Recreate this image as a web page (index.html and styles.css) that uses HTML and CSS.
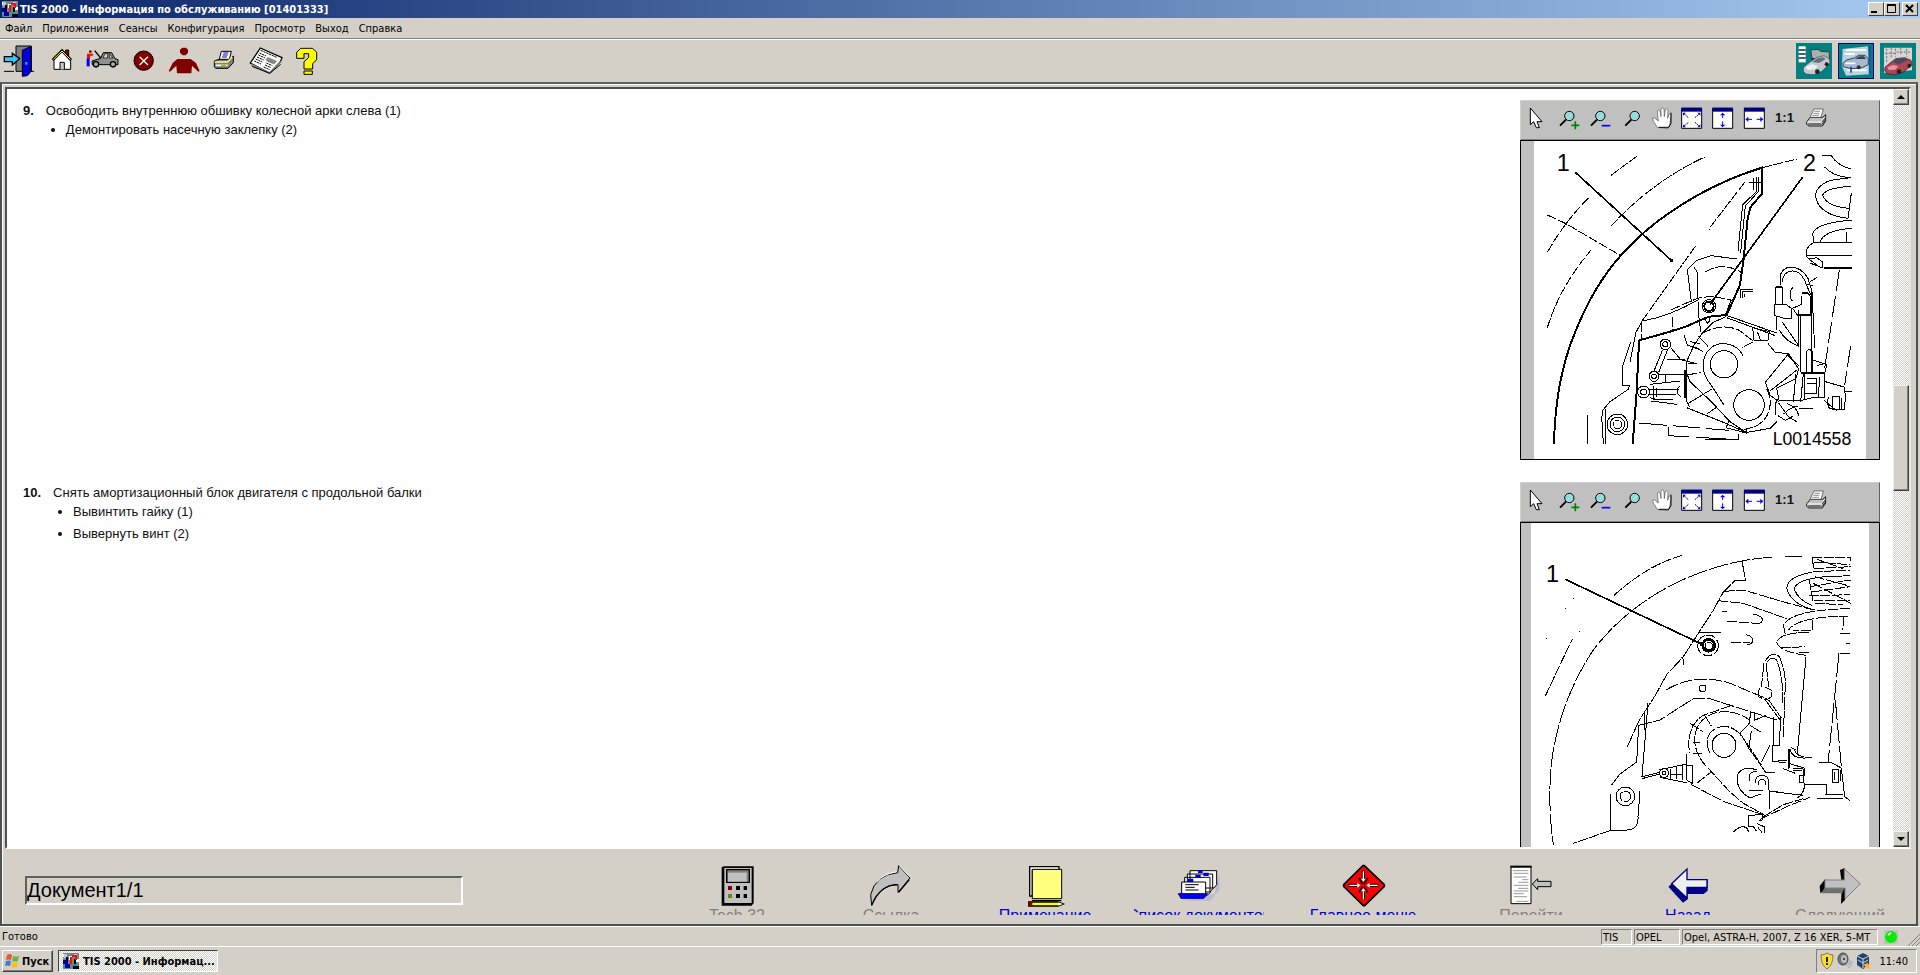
FILE: index.html
```html
<!DOCTYPE html>
<html lang="ru">
<head>
    <meta charset="UTF-8">
    <meta name="viewport" content="width=device-width, initial-scale=1.0">
    <title>TIS 2000 - Информация по обслуживанию</title>
    <link rel="stylesheet" href="styles.css">
</head>
<body>
    <!-- shared icons -->
    <svg class="sprite" aria-hidden="true">
        <symbol id="app" viewBox="0 0 16 16">
            <path fill="#808080" d="M0 0h16v16H0z"/>
            <path fill="#fff" d="M0 1h4v3H0zM6 3h3v4H6zM13 6h3v3h-3z"/>
            <path fill="#9cf" d="M1 1h3v4H1zM11 1h3v2h-3z"/>
            <path fill="#00a" d="M0 7h5v4H0zM2 11h5v4H2z"/>
            <path fill="#000" d="M3 4h2v5H3zM11 6h2v5h-2zM10 13h6v3h-6z"/>
            <path fill="#e11" d="M7 4h2v7H7zM9 2h5v2H9zM12 3h2v4h-2z"/>
            <path fill="#0aa" d="M9 11h5v2H9zM0 13h2v3H0z"/>
        </symbol>
        <symbol id="cursor" viewBox="39 310 84 84">
            <path d="M61 322v50l10-9 8 18h9l-7-18h15z" fill="#fff" stroke="#000" stroke-width="3"/>
        </symbol>
        <symbol id="lens" viewBox="318 310 84 84">
            <path d="M346 375l18-18" stroke="#000" stroke-width="6" fill="none"/>
            <circle cx="374" cy="346" r="14" fill="#b8d8d8" stroke="#000" stroke-width="3"/>
            <path d="M366 344l6-8h6l-12 18zM371 354l14-14v6l-8 9z" fill="#5fe8e8"/>
        </symbol>
        <symbol id="zoom-in" viewBox="0 0 84 84">
            <use href="#lens" x="-10" y="0" width="84" height="84"/>
            <path d="M64 52v24M52 64h24" stroke="#008000" stroke-width="5"/>
        </symbol>
        <symbol id="zoom-out" viewBox="0 0 84 84">
            <use href="#lens" x="-10" y="0" width="84" height="84"/>
            <path d="M50 65h26" stroke="#00f" stroke-width="5"/>
        </symbol>
        <symbol id="hand" viewBox="411 310 84 84">
            <path d="M442 380l-12-19-2-9h6l11 9-3-30 4-3 4 3 3 17v-23l4-4 5 4 1 23 3-22 4-2 4 4-1 25 4-13h4l2 4-4 30-5 7v3z" fill="#fff" stroke="#555" stroke-width="2"/>
            <path d="M483 336v32l-7 12h-30" fill="none" stroke="#000" stroke-width="3"/>
        </symbol>
        <symbol id="fit" viewBox="504 310 84 84">
            <path d="M515 323h60v60h-60z" fill="#fff" stroke="#000" stroke-width="3"/>
            <path d="M514 321h62v12h-62z" fill="#000080"/>
            <path d="M521 338l14 13m20 14l14 13M569 338l-14 13m-20 14l-14 13" stroke="#000" stroke-width="3" stroke-dasharray="5 2"/>
            <path d="M519 336h9l-9 9zM571 336h-9l9 9zM519 380h9l-9-9zM571 380h-9l9-9z" fill="#00f"/>
        </symbol>
        <symbol id="fit-v" viewBox="597 310 84 84">
            <path d="M608 323h60v60h-60z" fill="#fff" stroke="#000" stroke-width="3"/>
            <path d="M607 321h62v12h-62z" fill="#000080"/>
            <path d="M638 342v10m0 10v12" stroke="#00f" stroke-width="3"/>
            <path d="M638 336l8 8h-16zM638 380l8-8h-16z" fill="#00f"/>
        </symbol>
        <symbol id="fit-h" viewBox="690 310 84 84">
            <path d="M703 323h60v60h-60z" fill="#fff" stroke="#000" stroke-width="3"/>
            <path d="M702 321h62v12h-62z" fill="#000080"/>
            <path d="M713 356h13m14 0h14" stroke="#00f" stroke-width="3"/>
            <path d="M706 356l9-8v16zM760 356l-9-8v16z" fill="#00f"/>
        </symbol>
        <symbol id="print" viewBox="876 310 84 84">
            <path d="M891 362l10-12h37l9-8v19l-10 15h-40l-8-6z" fill="#c0c0c0" stroke="#222" stroke-width="3"/>
            <path d="M900 350l12-25h28l-7 25z" fill="#fff" stroke="#333" stroke-width="2"/>
            <path d="M913 332h17M910 338h18M907 344h20" stroke="#555" stroke-width="2"/>
            <path d="M892 364h42l10-14" fill="none" stroke="#fff" stroke-width="3"/>
            <path d="M895 370h38M936 364l10-12M936 372l10-14" stroke="#222" stroke-width="3"/>
        </symbol>
    </svg>

    <header class="titlebar">
        <svg class="app-icon"><use href="#app"/></svg>
        <h1>TIS 2000 - Информация по обслуживанию [01401333]</h1>
        <div class="window-buttons">
            <button aria-label="Свернуть"><svg viewBox="0 0 13 12"><path d="M2 8h6v2H2z"/></svg></button>
            <button aria-label="Развернуть"><svg viewBox="0 0 13 12"><path d="M2 1h9v9H2zM3 3v6h7V3z" fill-rule="evenodd"/></svg></button>
            <button class="close" aria-label="Закрыть"><svg viewBox="0 0 13 12"><path d="M3 2l7 7M10 2l-7 7" stroke="#000" stroke-width="2"/></svg></button>
        </div>
    </header>

    <nav class="menubar">
        <a href="#">Файл</a>
        <a href="#">Приложения</a>
        <a href="#">Сеансы</a>
        <a href="#">Конфигурация</a>
        <a href="#">Просмотр</a>
        <a href="#">Выход</a>
        <a href="#">Справка</a>
    </nav>

    <div class="toolbar">
        <button class="exit" aria-label="Выход">
            <svg viewBox="6 133 102 102">
                <path d="M12 215h30M88 215h14" stroke="#000" stroke-width="3"/>
                <path d="M48 139h46v76H48z" fill="#808080" stroke="#000" stroke-width="3"/>
                <path d="M67 152l26-12v75l-11 13-15 2z" fill="#0000d8" stroke="#000" stroke-width="3"/>
                <path d="M76 187h6v8h-6z" fill="#0cf"/>
                <path d="M13 171h24v-10l22 16-22 19v-10H13z" fill="#35c8f0" stroke="#000" stroke-width="4"/>
            </svg>
        </button>
        <button aria-label="Домой">
            <svg viewBox="136 133 102 102">
                <path d="M198 151h9v24h-9z" fill="#a00000" stroke="#000" stroke-width="3"/>
                <path d="M163 177l24-23 26 23v32h-50z" fill="#fff" stroke="#000" stroke-width="3"/>
                <path d="M159 181l28-28 27 28" fill="none" stroke="#000" stroke-width="8"/>
                <path d="M161 179l26-25 25 25" fill="none" stroke="#ff0" stroke-width="3"/>
                <path d="M181 209v-21h13v21" fill="#ccc" stroke="#000" stroke-width="3"/>
            </svg>
        </button>
        <button aria-label="Автомобиль">
            <svg viewBox="256 133 102 102">
                <path d="M274 184l26-8 8-17h25l10 18 9 3v15h-77z" fill="#909090" stroke="#000" stroke-width="3"/>
                <path d="M307 175l6-13h8v13zM326 162l11 13h-11z" fill="#d4d0c8" stroke="#000" stroke-width="2"/>
                <path d="M282 153l18 22" stroke="#000" stroke-width="4"/>
                <circle cx="286" cy="194" r="8" fill="#aaa" stroke="#000" stroke-width="4"/>
                <circle cx="337" cy="194" r="8" fill="#aaa" stroke="#000" stroke-width="4"/>
                <circle cx="269" cy="156" r="4" fill="#800000"/>
                <path d="M259 162h18v6h-9v9h-9z" fill="#f00"/>
                <path d="M258 176h9v24h-9z" fill="#00f"/>
            </svg>
        </button>
        <button aria-label="Стоп">
            <svg viewBox="382 133 102 102">
                <circle cx="432" cy="183" r="29" fill="#800000" stroke="#000" stroke-width="3"/>
                <path d="M420 171l25 25M445 171l-25 25" stroke="#fff" stroke-width="4"/>
            </svg>
        </button>
        <button aria-label="Клиент">
            <svg viewBox="502 133 102 102">
                <path d="M545 144h11l6 6v9l-7 8h-9l-8-8v-9zM530 178h40l16 12 11 24-4 2-19-18-2 23h-43l-2-23-19 18-4-2 12-24z" fill="#800000"/>
            </svg>
        </button>
        <button aria-label="Печать">
            <svg viewBox="627 133 102 102">
                <path d="M643 184l14-5h31l12-10v20l-16 17h-37l-4-5z" fill="#808080" stroke="#000" stroke-width="3"/>
                <path d="M658 179l6-24h30l-6 24z" fill="#fff" stroke="#000" stroke-width="3"/>
                <path d="M670 160h15M668 166h15M666 172h15" stroke="#00a" stroke-width="3"/>
                <path d="M644 187h38l15-15" fill="none" stroke="#ffff80" stroke-width="4"/>
                <path d="M647 197h36" stroke="#fff" stroke-width="5"/>
                <path d="M663 197h15" stroke="#aa0" stroke-width="4"/>
            </svg>
        </button>
        <button aria-label="Новости">
            <svg viewBox="750 133 102 102">
                <path d="M751 190l30-45 65 29-5 13-32 33z" fill="#fff" stroke="#000" stroke-width="4"/>
                <path d="M753 194l56 26 33-35" fill="none" stroke="#808080" stroke-width="5"/>
                <path d="M756 200l53 21 33-27" fill="none" stroke="#000" stroke-width="3"/>
                <path d="M782 152l48 21M778 160l20 9M775 166l20 9M771 172l20 9M767 178l20 9M763 184l20 9M803 184l18 8M799 190l18 8M795 196l18 8M791 202l18 8" stroke="#000" stroke-width="3" stroke-dasharray="7 2"/>
                <path d="M803 172l28 12-8 10-27-13z" fill="#888"/>
            </svg>
        </button>
        <button aria-label="Помощь">
            <svg viewBox="873 133 102 102">
                <path d="M890 176v-18l12-12h36l12 12v22l-12 12v16h-26v-22l14-12v-12h-14v14z" fill="#ff0" stroke="#000" stroke-width="3"/>
                <path d="M912 214h25v10h-25z" fill="#ff0" stroke="#000" stroke-width="3"/>
            </svg>
        </button>
        <div class="views">
            <button aria-label="Каталог">
                <svg viewBox="858 129 108 108">
                    <path d="M866 139h21v48h-21z" fill="#fff"/>
                    <path d="M866 150h21M866 162h21M866 174h21" stroke="#033" stroke-width="4"/>
                    <path d="M902 150l22-2 8 6 26 2v26l-50 6z" fill="#a9b0b0" stroke="#244" stroke-width="3"/>
                    <path d="M904 174h16v14h-14z" fill="#222"/>
                    <path d="M880 203l16-14 22-16 24-6 16 10 2 12-24 25-24 10-24-2-8-8z" fill="#c3c9cf" stroke="#445" stroke-width="2"/>
                    <path d="M906 186l16-11 18-3 7 5-20 12z" fill="#63707d"/>
                    <path d="M886 201l20-8 18 5-10 10-20 2z" fill="#eef1f4"/>
                    <circle cx="922" cy="215" r="7" fill="#222"/><circle cx="950" cy="193" r="6" fill="#222"/>
                </svg>
            </button>
            <button class="active" aria-label="Обслуживание">
                <svg viewBox="984 129 108 108">
                    <path d="M998 147l76-8 4 84-70 4-12-28z" fill="#b9d4df"/>
                    <path d="M1008 150h60M1004 162h30M1012 211h58M1002 202h40" stroke="#fff" stroke-width="6"/>
                    <path d="M999 190l10-10 24-6 12-8h20l10 10v18l-22 10-30 2-24-6z" fill="#a7b9cc" stroke="#345" stroke-width="3"/>
                    <path d="M1035 177l12-8h15l6 8z" fill="#345"/>
                    <path d="M1006 190h30" stroke="#fff" stroke-width="5"/>
                    <circle cx="1046" cy="202" r="6" fill="#234"/>
                    <path d="M1079 138v84M1023 200v18" stroke="#1c4c9c" stroke-width="5"/>
                </svg>
            </button>
            <button aria-label="Кузов">
                <svg viewBox="1110 129 108 108">
                    <path d="M1122 143h84v68l-84 8z" fill="#d5d5d8"/>
                    <path d="M1130 146v42M1144 143v30M1156 146v24M1172 143v20M1190 146v24M1125 160h30M1160 156h40" stroke="#777" stroke-width="3" stroke-dasharray="7 4"/>
                    <path d="M1125 202l14-12 18-14 26-3 20 8 3 14-24 20-28 10-22-4-8-8z" fill="#ae4454" stroke="#411" stroke-width="2"/>
                    <path d="M1146 187l15-11 22-2 10 6-26 12z" fill="#444c60"/>
                    <path d="M1132 202l18-7 15 4-9 10-20 1z" fill="#dc98a0"/>
                    <circle cx="1167" cy="215" r="7" fill="#222"/><circle cx="1198" cy="197" r="6" fill="#222"/>
                </svg>
            </button>
        </div>
    </div>

    <main class="workspace">
        <div class="document">
            <div class="steps">
                <section class="step">
                    <b class="number">9.</b>
                    <div class="instructions">
                        <p>Освободить внутреннюю обшивку колесной арки слева (1)</p>
                        <ul>
                            <li>Демонтировать насечную заклепку (2)</li>
                        </ul>
                    </div>
                    <div class="figure">
                        <div class="figure-tools">
                            <button aria-label="Выбор"><svg><use href="#cursor"/></svg></button>
                            <button aria-label="Увеличить"><svg><use href="#zoom-in"/></svg></button>
                            <button aria-label="Уменьшить"><svg><use href="#zoom-out"/></svg></button>
                            <button aria-label="Лупа"><svg><use href="#lens"/></svg></button>
                            <button aria-label="Сдвиг"><svg><use href="#hand"/></svg></button>
                            <button aria-label="Вписать"><svg><use href="#fit"/></svg></button>
                            <button aria-label="По высоте"><svg><use href="#fit-v"/></svg></button>
                            <button aria-label="По ширине"><svg><use href="#fit-h"/></svg></button>
                            <button>1:1</button>
                            <button aria-label="Печать"><svg><use href="#print"/></svg></button>
                        </div>
                        <div class="figure-view">
                            <svg class="drawing wheel-arch" viewBox="72 18 996 954">
                                <!-- wheel arch -->
                                <path class="bold" d="M132 928C134 820 150 700 196 590C236 490 280 420 332 362C400 285 470 235 560 182C625 146 690 118 756 98V176L722 216L713 250L700 380L690 450L650 540L597 545L570 556L530 574L480 590L388 616L386 640L380 770L368 926"/>
                                <path class="dash" d="M756 98L860 72M302 122L380 64M302 274C390 180 480 115 584 66M112 352C150 285 190 235 238 186M112 578C140 490 180 420 244 344M112 240L168 266L332 362"/>
                                <path d="M738 126v45l-40 38l-14 140M744 126v45l-38 42l-14 140M730 130v36M716 142h40"/>
                                <path class="dash" d="M704 142L604 272L596 286M556 334L396 558"/>
                                <path d="M396 558C460 548 520 520 566 494M396 558L378 592L360 680M362 622L336 700V750H358L356 762L300 800L278 826L274 862M276 860L280 926M286 822V926M233 840V926"/>
                                <path class="dash" d="M484 524L562 490L600 484L664 494M488 546V586M395 562V612"/>
                                <!-- cover -->
                                <path d="M544 500L532 404L560 376L604 362M604 362L680 372M552 396L564 416L562 490"/>
                                <path class="dash" d="M584 412C620 388 660 390 696 414"/>
                                <path d="M566 500V540L572 590M664 494L646 540M692 490V462H728M698 488V470H728M704 486V476"/>
                                <path d="M646 540L800 594M650 548L796 602M648 545L610 562L576 596L552 630L530 680V800L538 816"/>
                                <path class="bold" d="M525 706V790"/>
                                <circle cx="597" cy="514" r="20"/>
                                <circle class="bold" cx="597" cy="514" r="14"/>
                                <path d="M587 545v12l6 8 6-8v-12"/>
                                <!-- gearbox -->
                                <circle cx="642" cy="688" r="41"/>
                                <path d="M700 664C680 620 620 612 592 650C572 680 578 720 600 745L642 810"/>
                                <path class="dash" d="M576 596C610 576 650 568 688 586L732 620L696 638M532 684L564 686M554 636L580 650M532 720L574 712"/>
                                <path d="M526 704L540 740L604 800L660 860L708 892M530 808L606 762M592 836L618 818M530 818L640 862L708 892"/>
                                <circle cx="717" cy="810" r="46"/>
                                <path class="dash" d="M770 762C790 800 782 850 740 872L700 886"/>
                                <path d="M708 878v16l-28-8-32-8 10-22M712 892L780 880L800 860"/>
                                <path d="M522 600l10 30 36 14M540 620l30 6M566 604l28 30M728 578l4 38h42l4-26-50-12M742 590l10 26"/>
                                <path d="M774 626L796 652L836 656L866 702L858 730L800 760L806 790L796 806M836 656L766 742L780 780L806 800M862 704L780 768M832 660L868 694"/>
                                <!-- bracket on the left -->
                                <circle cx="466" cy="628" r="16"/><circle cx="466" cy="628" r="8"/>
                                <circle cx="432" cy="724" r="15"/><circle cx="432" cy="724" r="7"/>
                                <circle cx="401" cy="771" r="18"/><circle cx="401" cy="771" r="9"/>
                                <path d="M458 644L432 708M472 646L446 712M484 640L512 674L560 686M470 674h56M448 718h78M420 748L510 738M418 764h90M418 778h80M430 754v40M440 760v26M420 788l20 6h50M510 754l-8 6v16l10 8M424 798L500 808M466 720v20"/>
                                <circle cx="322" cy="868" r="31"/><circle cx="322" cy="868" r="22"/><circle class="dash" cx="322" cy="868" r="13"/>
                                <path d="M386 864L656 886" stroke-dasharray="84 18"/>
                                <path d="M474 876V902L684 914V896M586 912h96" stroke-dasharray="90 20"/>
                                <!-- hose -->
                                <path d="M810 450V430C812 385 870 385 894 430L906 470L914 640M816 440C822 400 864 396 884 436L902 480"/>
                                <path d="M796 456h22v52h-22zM792 508h36l16 12v30h-20l-30-8zM800 546v40M816 560L866 632M808 584C820 610 840 624 866 634V524M872 540V710M904 470V710"/>
                                <path d="M876 474h18l8 12v54h-40l-14-20 26-12v-24"/>
                                <path class="bold" d="M876 474h18M862 540h40M798 456h18"/>
                                <path d="M848 458q-8 6-8 20t8 20M900 440l20-12M890 448l18 4M888 650v60M908 650v62M888 650q10-12 20 0"/>
                                <!-- lower joint -->
                                <path class="bold" d="M872 714h74"/>
                                <path d="M884 716v80M930 726l-6 60M890 730h28v44h-32M892 746h26M850 800L858 716M872 800L880 716M942 716v72h-36l-30 8h-70M946 740L1002 756L1006 780L1004 824M942 796L976 824H1006M1006 770h20"/>
                                <path d="M956 786q-8 16 2 34l24 6M966 784v38h22v-38zM994 788v36M910 676l40 12-4 24M920 692l28-8"/>
                                <path d="M806 804L836 846L860 860M832 806q30 10 34 36M820 838q20-22 44-24M804 842l22 14 22-12M866 820h44M796 800v40"/>
                                <!-- spring and strut -->
                                <path d="M936 62L964 62Q980 90 1022 102M944 96Q970 126 1022 128L960 136Q910 158 918 190Q930 240 1014 250M1024 154Q950 158 938 180Q950 216 1020 220M1024 174L1014 250"/>
                                <path d="M1026 256Q920 262 908 296L912 324M1026 280Q940 286 930 322M1026 322H912Q880 340 892 368L920 390M890 360H1026M896 372L920 368L936 380V398L900 384M1008 290v30"/>
                                <path class="bold" d="M942 398H1026"/>
                                <path d="M988 406L944 700M1022 632L1004 750" stroke-dasharray="64 14"/>
                                <!-- callouts -->
                                <path class="leader" d="M196 112L484 376M878 126L600 508"/>
                                <circle class="dot" cx="484" cy="376" r="4"/>
                                <text x="140" y="108" font-size="70">1</text>
                                <text x="879" y="108" font-size="70">2</text>
                                <text x="788" y="930" font-size="53">L0014558</text>
                            </svg>
                        </div>
                    </div>
                </section>

                <section class="step">
                    <b class="number">10.</b>
                    <div class="instructions">
                        <p>Снять амортизационный блок двигателя с продольной балки</p>
                        <ul>
                            <li>Вывинтить гайку (1)</li>
                            <li>Вывернуть винт (2)</li>
                        </ul>
                    </div>
                    <div class="figure">
                        <div class="figure-tools">
                            <button aria-label="Выбор"><svg><use href="#cursor"/></svg></button>
                            <button aria-label="Увеличить"><svg><use href="#zoom-in"/></svg></button>
                            <button aria-label="Уменьшить"><svg><use href="#zoom-out"/></svg></button>
                            <button aria-label="Лупа"><svg><use href="#lens"/></svg></button>
                            <button aria-label="Сдвиг"><svg><use href="#hand"/></svg></button>
                            <button aria-label="Вписать"><svg><use href="#fit"/></svg></button>
                            <button aria-label="По высоте"><svg><use href="#fit-v"/></svg></button>
                            <button aria-label="По ширине"><svg><use href="#fit-h"/></svg></button>
                            <button>1:1</button>
                            <button aria-label="Печать"><svg><use href="#print"/></svg></button>
                        </div>
                        <div class="figure-view">
                            <svg class="drawing engine-mount" viewBox="63 159 1014 1020">
                                <!-- wheel arch -->
                                <path class="dash" d="M312 376C380 316 440 278 522 254M106 678L154 576L188 506M166 414h3M190 384h3M208 484h3M108 504h3"/>
                                <path d="M876 260H826M786 262C700 266 600 290 500 338C400 386 310 460 250 540C190 630 150 730 130 840C116 920 116 1030 130 1124" stroke-dasharray="60 7"/>
                                <path d="M696 272L706 330H676L640 366L608 424L566 488L520 560L470 614L436 676L388 750L352 830" stroke-dasharray="50 4"/>
                                <path d="M566 488h66M386 766L380 876L330 912L304 946M414 700L396 920L446 908M404 724V780M396 926L450 912M302 972V1080H350Q386 1080 384 1040L390 964"/>
                                <path class="dash" d="M300 1082L190 1120"/>
                                <circle cx="346" cy="979" r="28"/><circle class="dash" cx="346" cy="979" r="16"/>
                                <!-- side member -->
                                <path class="dash" d="M644 364L700 360L836 400L912 420M624 392L700 400L830 446M636 424h14M652 454L740 460M664 516h56"/>
                                <path d="M728 432q34 6 28 22q-6 8-20 8M708 494q24 6 20 20q-4 10-18 10M512 560q14 10 8 26"/>
                                <path d="M468 660C530 622 600 620 660 640L770 686M386 766L450 750L550 686H600L680 712L800 750" stroke-dasharray="40 5"/>
                                <circle cx="578" cy="655" r="10"/>
                                <!-- gearbox -->
                                <circle cx="642" cy="826" r="36"/>
                                <path d="M600 850C574 800 610 766 650 770C680 774 700 800 716 834L766 906" stroke-dasharray="40 4"/>
                                <path class="dash" d="M660 708L580 736C540 760 530 810 540 850M720 752C680 716 600 712 566 764C544 800 552 850 590 890L660 966L700 1000L762 1034M540 760L580 786M548 816h22M550 852L576 850M690 790L754 884"/>
                                <path class="dash" d="M544 944L640 994L760 1034M560 940L606 904M584 736l20 32"/>
                                <circle cx="462" cy="909" r="14"/><circle cx="462" cy="909" r="6"/>
                                <path d="M446 900L530 882M450 922L530 938M530 852V930L546 940V886H530M480 896v30M500 890v38M480 912h40M516 886v44"/>
                                <path d="M740 900Q700 884 682 914Q676 960 720 984L752 972M720 932Q710 906 740 904M736 938q0-22 20-22t20 22l4 80M744 944q0-16 12-16t12 16M718 960h40M780 964L880 976"/>
                                <!-- pipe -->
                                <path d="M766 574Q784 540 808 560Q826 600 826 640L820 800M772 576Q784 556 800 570Q812 600 816 640V700M762 580L754 650M768 580L776 650M748 654L744 680L770 690L784 680V660L766 652M766 690L810 750M776 690L814 744" stroke-dasharray="40 4"/>
                                <path d="M790 740V826M812 744L808 826H786V874H806M754 876L780 826M722 726L718 760L690 790M736 750L768 736M720 766L752 786M724 782L716 836M732 730v24"/>
                                <path d="M804 870h26M806 876h22M834 838v60M838 838v56M850 896h30M850 900h26"/>
                                <path d="M840 838Q846 872 906 862M852 838Q862 864 900 862M862 850L888 560M836 880l46 14v22h-14v20h12v-40M820 896L856 910M766 906h30M858 840l-16-8"/>
                                <!-- spring and strut -->
                                <path class="dash" d="M906 262H1022L1020 272M908 264L910 296L1022 290M912 276L1020 284M920 268L1000 296M908 306L1020 300"/>
                                <path d="M906 306Q820 324 832 362Q850 406 914 420M1020 318Q866 316 852 356Q866 392 906 406"/>
                                <path class="dash" d="M898 330L910 400M900 350L1022 330M906 366L1020 350M896 378L1020 374M910 390L1020 392M914 400L1000 404M910 340L1022 400M914 320L1010 346"/>
                                <path class="dash" d="M1020 416Q840 420 820 466L826 492M1018 438Q860 440 836 480M1002 438L998 480M908 450V480H850"/>
                                <path class="dash" d="M896 488Q810 486 800 518Q810 546 890 556M812 534L884 530M896 548H860M1020 490H984M1020 520h-12M1020 550H984L984 576"/>
                                <path d="M986 560L954 880M976 690L994 890" stroke-dasharray="60 10"/>
                                <!-- lower arm -->
                                <path d="M928 876H960L994 894L1004 980L1020 992M886 944H950L948 972H1000M966 898h18v38h-18zM972 906v24M990 900v32M884 940Q884 970 862 984M920 984H1000"/>
                                <path class="dash" d="M760 1040L820 1004L880 986M750 1048L830 1010L900 982M790 964L860 974"/>
                                <path d="M716 1036v34h14l10 14M716 1038L756 1032V1050L746 1052M670 1086Q700 1056 716 1084M690 1072q20-8 26 14M740 1060l22 10v18M744 1072l12 16"/>
                                <!-- nut -->
                                <circle class="dash" cx="594" cy="526" r="31"/>
                                <circle class="nut" cx="596" cy="526" r="18"/>
                                <circle cx="596" cy="528" r="11"/>
                                <path class="leader" d="M166 328L574 522"/>
                                <circle class="dot" cx="574" cy="522" r="4"/>
                                <text x="108" y="335" font-size="70">1</text>
                            </svg>
                        </div>
                    </div>
                </section>
            </div>
            <div class="scrollbar">
                <button class="up" aria-label="Вверх"></button>
                <div class="track"><div class="thumb"></div></div>
                <button class="down" aria-label="Вниз"></button>
            </div>
        </div>

        <footer class="panel">
            <div class="counter">Документ1/1</div>
            <div class="actions">
                <button disabled>
                    <svg viewBox="18 12 126 126">
                        <path d="M35 22l6-3h90v110l-6 8H35z" fill="#000"/>
                        <path d="M43 24h82v105H43z" fill="#c0c0c0"/>
                        <path d="M50 29h68v38H50z" fill="#808080" stroke="#000" stroke-width="4"/>
                        <path d="M54 38h56v27H54z" fill="#c0c0c0"/>
                        <path d="M54 78h12v12H54z" fill="#800000"/>
                        <path d="M54 102h12v12H54z" fill="#808000"/>
                        <path d="M78 78h12v12H78zM101 78h10v12h-10zM78 102h12v12H78zM101 102h10v12h-10z" fill="#000"/>
                    </svg>
                    <span>Tech 32</span>
                </button>
                <button disabled>
                    <svg viewBox="480 12 126 126">
                        <path d="M485 136L482 104Q496 44 563 38L566 17L600 54L564 97V74Q510 72 485 136z" fill="#c0c0c0" stroke="#000" stroke-width="3"/>
                        <path d="M563 74Q510 74 485 136M566 97l32-38" fill="none" stroke="#000" stroke-width="4"/>
                        <path d="M500 66Q520 42 560 35M568 17l32 34" fill="none" stroke="#fff" stroke-width="3"/>
                    </svg>
                    <span>Ссылка</span>
                </button>
                <button>
                    <svg viewBox="942 12 126 126">
                        <path d="M959 20h88v10h-80v78h-8z" fill="#fff" stroke="#000" stroke-width="4"/>
                        <path d="M967 28h88v88h-88z" fill="#ffff80" stroke="#000" stroke-width="3"/>
                        <path d="M966 122h88" stroke="#000" stroke-width="4"/>
                        <path d="M956 126h88l16 6-16 6h-88z" fill="#ff0" stroke="#000" stroke-width="4"/>
                        <path d="M955 124h12v14h-12z" fill="#800000"/>
                        <path d="M1045 127l13 5-13 5z" fill="#fff"/>
                    </svg>
                    <span>Примечание</span>
                </button>
                <button>
                    <svg viewBox="1404 12 126 126">
                        <path d="M1416 122l84 0 28-32V40l-14 62z" fill="#b8b8d4"/>
                        <path d="M1440 32h80v42l-8 10h-72zM1432 42h76v44l-8 10h-68zM1424 52h76v46l-8 8h-68z" fill="#fff" stroke="#000" stroke-width="3"/>
                        <path d="M1415 66h72v38h-72z" fill="#fff" stroke="#000" stroke-width="3"/>
                        <path d="M1426 74h40M1426 82h28M1426 90h40" stroke="#000" stroke-width="3"/>
                        <path d="M1434 56h16v10h-16zM1456 44h16v10h-16zM1464 30h14v9h-14zM1480 38h16v10h-16z" fill="#00c"/>
                        <path d="M1405 101h74l14 0-12 14h-68z" fill="#00f" stroke="#000080" stroke-width="3"/>
                    </svg>
                    <span>Список документов</span>
                </button>
                <button>
                    <svg viewBox="99 12 126 126">
                        <path d="M162 17h4l60 57v5l-59 58h-4l-59-58v-5z" fill="#f00" stroke="#000" stroke-width="5"/>
                        <path d="M163 32v26M163 92v26M119 76h26M182 76h26" stroke="#000" stroke-width="10"/>
                        <path d="M150 54l26 44M150 98l26-44" stroke="#000" stroke-width="5"/>
                        <path d="M163 34v24M163 94v24M121 76h24M182 76h24" stroke="#fff" stroke-width="4"/>
                        <path d="M156 56h14l-7 9zM156 94h14l-7-9zM145 69v14l9-7zM182 69v14l-9-7z" fill="#fff"/>
                        <path d="M159 72h8v8h-8z" fill="#f00"/>
                    </svg>
                    <span>Главное меню</span>
                </button>
                <button disabled>
                    <svg viewBox="611 12 126 126">
                        <path d="M614 20h60v111h-60z" fill="#fff" stroke="#000" stroke-width="3"/>
                        <path d="M612 20h64" stroke="#000" stroke-width="6"/>
                        <path d="M620 32h46M622 40h44M622 51h40M648 59h18M636 67h30M622 76h44M636 85h30M622 93h44M622 101h30M622 110h40M630 124h36" stroke="#999" stroke-width="3"/>
                        <path d="M678 72l16-16v8h40v16h-40v9z" fill="#c0c0c0" stroke="#000" stroke-width="3"/>
                    </svg>
                    <span>Перейти</span>
                </button>
                <button>
                    <svg viewBox="234 12 126 126">
                        <path d="M238 80l12-10 106-12v34l-12 10h-48v16l-14 10z" fill="#000080"/>
                        <path d="M248 71l46-44v32h60v23h-60v32z" fill="#eee" stroke="#000080" stroke-width="4"/>
                    </svg>
                    <span>Назад</span>
                </button>
                <button disabled>
                    <svg viewBox="694 12 126 126">
                        <path d="M698 100l-2-22 16-20 6 4v22zM757 30l14-6v36h-10zM762 84h10v36l-12 12z" fill="#000"/>
                        <path d="M701 100l10-17h59l-6 17z" fill="#707070"/>
                        <path d="M712 60h58V27l48 44-46 46V84h-60z" fill="#c0c0c0" stroke="#808080" stroke-width="3"/>
                    </svg>
                    <span>Следующий</span>
                </button>
            </div>
        </footer>
    </main>

    <div class="statusbar">
        <span class="message">Готово</span>
        <span class="cell app-name">TIS</span>
        <span class="cell brand">OPEL</span>
        <span class="cell vehicle">Opel, ASTRA-H, 2007, Z 16 XER, 5-MT</span>
        <svg class="led" viewBox="0 0 14 14"><path d="M0 0h14v14H0z" fill="#c0c0c0"/><circle cx="7" cy="7" r="6" fill="#0e0"/><path d="M4 5l3-2" stroke="#fff" stroke-width="2"/></svg>
        <svg class="grip" viewBox="0 0 12 12"><path d="M0 12L12 0M4 12l8-8M8 12l4-4" stroke="#808080" stroke-width="1"/></svg>
    </div>

    <div class="taskbar">
        <button class="start">
            <svg viewBox="0 0 16 16">
                <path d="M3 2q3-2 5 0L7 7Q4 6 2 7z" fill="#e8582a"/>
                <path d="M9 3q3 1 6 0l-1 5q-3 1-6 0z" fill="#6cb33f"/>
                <path d="M2 8q3-1 5 0l-1 5q-3-1-5 0z" fill="#3c78d8"/>
                <path d="M8 9q3 1 6 0l-1 5q-3 1-6 0z" fill="#f5c21c"/>
            </svg>
            Пуск
        </button>
        <button class="task">
            <svg><use href="#app"/></svg>
            TIS 2000 - Информац...
        </button>
        <div class="tray">
            <svg viewBox="0 0 16 16"><path d="M8 0q3 2 6 2 0 10-6 14Q2 12 2 2q3 0 6-2z" fill="#fd2" stroke="#777" stroke-width="1"/><path d="M7 4h2v5H7zM7 10h2v2H7z" fill="#222"/></svg>
            <svg viewBox="0 0 16 16"><ellipse cx="6" cy="6" rx="5" ry="6" fill="#777" stroke="#444"/><ellipse cx="7" cy="6" rx="3" ry="4" fill="#bbb"/><circle cx="7" cy="6" r="1" fill="#222"/><path d="M9 13q4-1 4-6M11 15q4-2 4-7" fill="none" stroke="#99c"/></svg>
            <svg viewBox="0 0 16 16"><path d="M2 3l6-3 6 3v9l-6 4-6-4z" fill="#246"/><path d="M2 3l6 3 6-3M8 6v9M3 7l5 3 5-3" fill="none" stroke="#cde" stroke-width="1"/><path d="M12 9l1 2h3l-2 2 1 3-3-2-3 2 1-3-2-2h3z" fill="#fa3"/></svg>
            <time>11:40</time>
        </div>
    </div>
</body>
</html>
```

FILE: styles.css
```css
* {
    margin: 0;
    padding: 0;
    box-sizing: border-box;
}

body {
    display: flex;
    flex-direction: column;
    height: 100vh;
    overflow: hidden;
    background: #d4d0c8;
    color: #000;
    font-family: "DejaVu Sans Condensed", "DejaVu Sans", sans-serif;
    font-size: 11px;
}

button {
    border: none;
    background: none;
    color: inherit;
    font: inherit;
}

svg {
    display: block;
    flex-shrink: 0;
    overflow: visible;
}

.sprite {
    position: absolute;
    width: 0;
    height: 0;
}

/* title bar */
.titlebar {
    display: flex;
    align-items: center;
    height: 18px;
    padding: 0 2px;
    background: linear-gradient(to right, #0a246a, #a6caf0);
    color: #fff;
}

.app-icon {
    width: 16px;
    height: 16px;
}

.titlebar h1 {
    flex: 1;
    padding-left: 2px;
    font-size: 11px;
    font-weight: bold;
    white-space: nowrap;
}

.window-buttons {
    display: flex;
}

.window-buttons button {
    width: 16px;
    height: 14px;
    background: #d4d0c8;
    border: 1px solid;
    border-color: #fff #404040 #404040 #fff;
}

.window-buttons svg {
    width: 13px;
    height: 12px;
}

.window-buttons .close {
    margin-left: 2px;
}

/* menu */
.menubar {
    display: flex;
    align-items: center;
    gap: 10px;
    height: 21px;
    padding: 0 5px;
    border-bottom: 1px solid #808080;
}

.menubar a {
    color: #000;
    text-decoration: none;
}

.toolbar {
    display: flex;
    align-items: center;
    height: 43px;
    padding: 0 4px 0 2px;
    border-top: 1px solid #fff;
}

.toolbar button {
    display: flex;
    justify-content: center;
    width: 41px;
}

.toolbar .exit {
    width: 34px;
    margin-right: 5px;
}

.toolbar svg {
    width: 34px;
    height: 34px;
}

.toolbar .views {
    display: flex;
    gap: 6px;
    margin-left: auto;
}

.toolbar .views button,
.toolbar .views svg {
    width: 36px;
    height: 36px;
}

.views button {
    background: #008080;
}

.views .active {
    outline: 1px solid #000080;
    outline-offset: -1px;
}

/* document */
.workspace {
    display: flex;
    flex: 1;
    flex-direction: column;
    min-height: 0;
    padding: 3px 0 0 3px;
    border: 2px solid #505050;
    border-top-color: #606060;
    box-shadow: inset 1px 1px #fff;
    margin-right: 2px;
}

.document {
    display: flex;
    flex: 1;
    min-height: 0;
    margin-right: 5px;
    background: #fff;
    border: 2px solid;
    border-color: #505050 #e8e6e0 #fff #505050;
}

.steps {
    flex: 1;
    min-width: 0;
    padding: 11px 13px 0 16px;
    overflow: hidden;
    font-family: "Liberation Sans", Arial, sans-serif;
    font-size: 13px;
    line-height: 16px;
    color: #101010;
}

.step {
    display: flex;
    align-items: flex-start;
    margin-bottom: 22px;
}

.number,
.instructions {
    padding-top: 3px;
}

.instructions {
    flex: 1;
    padding-left: 12px;
}

.instructions ul {
    padding: 3px 0 0 20px;
}

.instructions li {
    margin-bottom: 6px;
}

.figure {
    width: 360px;
}

.figure-tools {
    display: flex;
    height: 40px;
    background: #c0c0c0;
    border: 1px solid;
    border-color: #d4d0c8 #606060 #808080 #d4d0c8;
}

.figure-tools button {
    display: flex;
    align-items: center;
    justify-content: center;
    width: 31px;
    height: 34px;
    font-size: 13px;
    font-weight: bold;
}

.figure-tools svg {
    width: 28px;
    height: 28px;
}

.figure-view {
    display: flex;
    justify-content: center;
    background: #c0c0c0;
    border: 1px solid #000;
}

.drawing {
    background: #fff;
    fill: none;
    stroke: #000;
    stroke-width: 3;
    shape-rendering: crispEdges;
}

.wheel-arch {
    width: 332px;
    height: 318px;
}

.engine-mount {
    width: 338px;
    height: 340px;
}

.drawing .bold {
    stroke-width: 6;
}

.drawing .leader {
    stroke-width: 5;
}

.drawing .dash {
    stroke-dasharray: 30 5;
}

.drawing .nut {
    stroke-width: 8;
}

.drawing .dot,
.drawing text {
    fill: #000;
}

.drawing text {
    stroke: none;
}

/* scroll bar */
.scrollbar {
    display: flex;
    flex-direction: column;
    width: 16px;
}

.scrollbar button,
.thumb {
    background: #d4d0c8;
    border: 1px solid;
    border-color: #f4f2ee #404040 #404040 #f4f2ee;
    box-shadow: inset -1px -1px #808080;
}

.scrollbar button {
    display: flex;
    align-items: center;
    justify-content: center;
    height: 16px;
}

.scrollbar button::before {
    content: "";
    border: 4px solid transparent;
}

.scrollbar .up::before {
    border-top: none;
    border-bottom-color: #000;
}

.scrollbar .down::before {
    border-bottom: none;
    border-top-color: #000;
}

.track {
    display: grid;
    flex: 1;
    grid-template-rows: 280fr 107fr 340fr;
    background: repeating-conic-gradient(#d4d0c8 0 25%, #fff 0 50%) 0 0 / 2px 2px;
}

.thumb {
    grid-row: 2;
}

/* bottom panel */
.panel {
    display: flex;
    align-items: flex-start;
    height: 75px;
}

.counter {
    width: 438px;
    height: 29px;
    margin: 27px 0 0 20px;
    border: 2px solid;
    border-color: #606060 #fff #fff #606060;
    font-family: "Liberation Sans", Arial, sans-serif;
    font-size: 20px;
    line-height: 25px;
}

.actions {
    display: grid;
    grid-template-columns: repeat(4, 154px) 174px 162px 152px 152px;
    margin-left: auto;
    padding-top: 15px;
}

.actions button {
    display: flex;
    flex-direction: column;
    align-items: center;
    color: #0000d0;
    font-family: "Liberation Sans", Arial, sans-serif;
    font-size: 16px;
    line-height: 20px;
    text-decoration: underline;
}

.actions button:disabled {
    color: #808080;
}

.actions svg {
    width: 42px;
    height: 42px;
}

.actions span {
    display: flex;
    justify-content: center;
    width: 130px;
    height: 9px;
    overflow: hidden;
    white-space: nowrap;
}

/* status bar */
.statusbar {
    display: flex;
    align-items: center;
    gap: 2px;
    height: 20px;
    padding-left: 2px;
    border-top: 1px solid #fff;
}

.message {
    flex: 1;
}

.cell {
    height: 16px;
    padding-left: 1px;
    border: 1px solid;
    border-color: #808080 #fff #fff #808080;
    line-height: 15px;
    white-space: nowrap;
}

.app-name {
    width: 31px;
}

.brand {
    width: 46px;
}

.vehicle {
    width: 196px;
}

.led {
    width: 14px;
    height: 14px;
    margin: 0 8px 0 4px;
}

.grip {
    width: 12px;
    height: 12px;
    align-self: flex-end;
}

/* task bar */
.taskbar {
    display: flex;
    align-items: center;
    gap: 5px;
    height: 29px;
    padding: 0 3px 0 2px;
    border-top: 1px solid #fff;
}

.taskbar button {
    display: flex;
    align-items: center;
    height: 22px;
    border: 1px solid;
    font-weight: bold;
    white-space: nowrap;
}

.taskbar svg {
    width: 16px;
    height: 16px;
}

.taskbar .start {
    gap: 2px;
    width: 51px;
    padding-left: 1px;
    border-color: #fff #404040 #404040 #fff;
    box-shadow: inset -1px -1px #808080;
}

.taskbar .task {
    gap: 4px;
    width: 160px;
    padding-left: 4px;
    border-color: #404040 #fff #fff #404040;
    background: repeating-conic-gradient(#d4d0c8 0 25%, #fff 0 50%) 0 0 / 2px 2px;
}

.tray {
    display: flex;
    align-items: center;
    gap: 2px;
    height: 24px;
    margin-left: auto;
    padding: 0 8px 0 2px;
    border: 1px solid;
    border-color: #808080 #fff #fff #808080;
}

.tray time {
    padding-left: 6px;
}
```
